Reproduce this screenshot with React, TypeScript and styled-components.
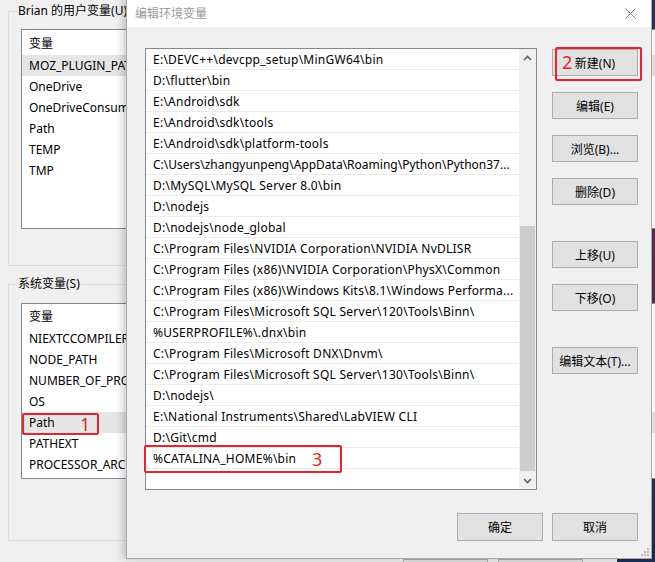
import React from 'react';
import styled, { createGlobalStyle } from 'styled-components';

const GlobalStyle = createGlobalStyle`
  html, body { margin: 0; padding: 0; }
  body {
    width: 655px; height: 562px; overflow: hidden;
    font-family: "Noto Sans", "Noto Sans CJK SC", sans-serif;
    font-size: 12px; color: #000;
  }
`;

const Screen = styled.div`
  position: relative;
  width: 655px;
  height: 562px;
  overflow: hidden;
  background: linear-gradient(180deg, #27345e 0%, #5d2d58 45%, #1b2d55 100%);
`;

const BgWindow = styled.div`
  position: absolute;
  left: 0;
  top: 0;
  width: 617px;
  height: 600px;
  box-sizing: border-box;
  padding: 11px 8px 0 8px;
  background: #f0f0f0;
  display: flex;
  flex-direction: column;
`;

const GroupBox = styled.div<{ $h: number; $pt: number; $mt?: number }>`
  position: relative;
  height: ${p => p.$h}px;
  margin-top: ${p => p.$mt ?? 0}px;
  box-sizing: border-box;
  border: 1px solid #dcdcdc;
  padding: ${p => p.$pt}px 0 0 12px;
`;

const Legend = styled.span`
  position: absolute;
  left: 8px;
  top: -9px;
  padding: 0 1px;
  line-height: 16px;
  background: #f0f0f0;
  white-space: nowrap;
`;

const BgList = styled.div<{ $h: number }>`
  width: 640px;
  height: ${p => p.$h}px;
  box-sizing: border-box;
  border: 1px solid #828790;
  background: #fff;
  display: flex;
  flex-direction: column;
`;

const BgHeader = styled.div<{ $h: number }>`
  height: ${p => p.$h}px;
  display: flex;
  align-items: center;
  padding-left: 7px;
`;

const BgRow = styled.div<{ $sel?: boolean }>`
  position: relative;
  height: 21px;
  line-height: 21px;
  padding-left: 7px;
  background: ${p => (p.$sel ? '#e6e6e6' : 'transparent')};
  white-space: nowrap;
`;

const BgFooter = styled.div`
  margin-top: 18px;
  display: flex;
  justify-content: flex-end;
  gap: 10px;
  padding-right: 26px;
`;

const BgButton = styled.div`
  width: 85px;
  height: 26px;
  box-sizing: border-box;
  border: 1px solid #adadad;
  background: #e1e1e1;
`;

const Dialog = styled.div`
  position: absolute;
  left: 126px;
  top: -1px;
  width: 526px;
  height: 560px;
  box-sizing: border-box;
  border: 1px solid #a9a9a9;
  background: #f0f0f0;
  box-shadow: -3px 0 8px rgba(0, 0, 0, 0.22);
  display: flex;
  flex-direction: column;
`;

const TitleBar = styled.div`
  height: 27px;
  flex: none;
  background: #fff;
  display: flex;
  align-items: center;
  justify-content: space-between;
  padding: 0 15px 0 8px;
`;

const Title = styled.span`
  color: #9a9a9a;
  font-size: 12px;
  margin-top: -2px;
`;

const Body = styled.div`
  display: flex;
  padding: 21px 13px 0 18px;
  gap: 15px;
`;

const PathList = styled.div`
  position: relative;
  width: 392px;
  height: 442px;
  flex: none;
  box-sizing: border-box;
  border: 1px solid #828790;
  background: #fff;
  display: flex;
`;

const Rows = styled.div`
  flex: 1;
  min-width: 0;
  display: flex;
  flex-direction: column;
`;

const PathRow = styled.div`
  position: relative;
  height: 21px;
  flex: none;
  box-sizing: border-box;
  border-bottom: 1px solid #ebebeb;
  padding: 1px 0 0 7px;
  line-height: 20px;
`;

const PathText = styled.div<{ $tight?: boolean }>`
  overflow: hidden;
  white-space: nowrap;
  letter-spacing: ${p => (p.$tight ? 0 : 0.25)}px;
`;

const ScrollBar = styled.div`
  width: 17px;
  flex: none;
  background: #f0f0f0;
  display: flex;
  flex-direction: column;
`;

const ScrollArrow = styled.div`
  height: 17px;
  flex: none;
  display: flex;
  align-items: center;
  justify-content: center;
`;

const ScrollTrack = styled.div`
  flex: 1;
  display: flex;
  flex-direction: column;
  padding: 0 1px;
`;

const Thumb = styled.div<{ $top: number; $h: number }>`
  margin-top: ${p => p.$top}px;
  height: ${p => p.$h}px;
  background: #cdcdcd;
`;

const Side = styled.div`
  display: flex;
  flex-direction: column;
  gap: 16px;
  padding-top: 1px;
`;

const Button = styled.div<{ $w?: number; $h?: number; $mt?: number }>`
  position: relative;
  width: ${p => p.$w ?? 86}px;
  height: ${p => p.$h ?? 27}px;
  margin-top: ${p => p.$mt ?? 0}px;
  box-sizing: border-box;
  border: 1px solid #adadad;
  background: #e1e1e1;
  display: flex;
  align-items: center;
  justify-content: center;
  white-space: nowrap;
  font-size: 12px;
`;

const Footer = styled.div`
  display: flex;
  justify-content: flex-end;
  gap: 9px;
  padding: 23px 13px 0 0;
`;

const Grip = styled.svg`
  position: absolute;
  right: 1px;
  bottom: 1px;
`;

const AnnotBox = styled.div<{ $l: number; $t: number; $w: number; $h: number }>`
  position: absolute;
  left: ${p => p.$l}px;
  top: ${p => p.$t}px;
  width: ${p => p.$w}px;
  height: ${p => p.$h}px;
  box-sizing: border-box;
  border: 2px solid #e8232a;
  border-radius: 2px;
  pointer-events: none;
`;

const Mark = styled.span<{ $l: number; $t: number }>`
  position: absolute;
  left: ${p => p.$l}px;
  top: ${p => p.$t}px;
  color: #e8232a;
  font-family: "Noto Sans", sans-serif;
  font-size: 18px;
  line-height: 18px;
  letter-spacing: 0;
`;

const userVars = ['MOZ_PLUGIN_PATH', 'OneDrive', 'OneDriveConsumer', 'Path', 'TEMP', 'TMP'];
const sysVars = ['NIEXTCCOMPILERSUPP', 'NODE_PATH', 'NUMBER_OF_PROCESSORS', 'OS', 'Path', 'PATHEXT', 'PROCESSOR_ARCHITECTURE'];

const paths = [
  'E:\\DEVC++\\devcpp_setup\\MinGW64\\bin',
  'D:\\flutter\\bin',
  'E:\\Android\\sdk',
  'E:\\Android\\sdk\\tools',
  'E:\\Android\\sdk\\platform-tools',
  'C:\\Users\\zhangyunpeng\\AppData\\Roaming\\Python\\Python37...',
  'D:\\MySQL\\MySQL Server 8.0\\bin',
  'D:\\nodejs',
  'D:\\nodejs\\node_global',
  'C:\\Program Files\\NVIDIA Corporation\\NVIDIA NvDLISR',
  'C:\\Program Files (x86)\\NVIDIA Corporation\\PhysX\\Common',
  'C:\\Program Files (x86)\\Windows Kits\\8.1\\Windows Performa...',
  'C:\\Program Files\\Microsoft SQL Server\\120\\Tools\\Binn\\',
  '%USERPROFILE%\\.dnx\\bin',
  'C:\\Program Files\\Microsoft DNX\\Dnvm\\',
  'C:\\Program Files\\Microsoft SQL Server\\130\\Tools\\Binn\\',
  'D:\\nodejs\\',
  'E:\\National Instruments\\Shared\\LabVIEW CLI',
  'D:\\Git\\cmd',
  '%CATALINA_HOME%\\bin',
];

const Chevron = ({ up }: { up?: boolean }) => (
  <svg width="9" height="6" viewBox="0 0 9 6">
    <path
      d={up ? 'M1 5 L4.5 1.5 L8 5' : 'M1 1 L4.5 4.5 L8 1'}
      fill="none"
      stroke="#606060"
      strokeWidth="1.6"
    />
  </svg>
);

export default function App() {
  return (
    <>
      <GlobalStyle />
      <Screen>
        <BgWindow>
          <GroupBox $h={255} $pt={17}>
            <Legend>Brian 的用户变量(U)</Legend>
            <BgList $h={200}>
              <BgHeader $h={25}>变量</BgHeader>
              {userVars.map((v, i) => (
                <BgRow key={v} $sel={i === 0}>{v}</BgRow>
              ))}
            </BgList>
          </GroupBox>
          <GroupBox $h={257} $pt={18} $mt={18}>
            <Legend>系统变量(S)</Legend>
            <BgList $h={176}>
              <BgHeader $h={24}>变量</BgHeader>
              {sysVars.map((v, i) => (
                <BgRow key={v + i} $sel={i === 4}>
                  {v}
                  {i === 4 && (
                    <>
                      <AnnotBox $l={0} $t={1} $w={77} $h={22} />
                      <Mark $l={58} $t={3}>1</Mark>
                    </>
                  )}
                </BgRow>
              ))}
            </BgList>
          </GroupBox>
          <BgFooter>
            <BgButton />
            <BgButton />
          </BgFooter>
        </BgWindow>

        <Dialog>
          <TitleBar>
            <Title>编辑环境变量</Title>
            <svg width="11" height="11" viewBox="0 0 11 11">
              <path d="M0.5 0.5 L10.5 10.5 M10.5 0.5 L0.5 10.5" stroke="#7a7a7a" strokeWidth="1" />
            </svg>
          </TitleBar>
          <Body>
            <PathList>
              <Rows>
                {paths.map((p, i) => (
                  <PathRow key={i}>
                    <PathText $tight={i === 5}>{p}</PathText>
                    {i === paths.length - 1 && (
                      <>
                        <AnnotBox $l={-2} $t={-3} $w={198} $h={28} />
                        <Mark $l={166} $t={2}>3</Mark>
                      </>
                    )}
                  </PathRow>
                ))}
              </Rows>
              <ScrollBar>
                <ScrollArrow><Chevron up /></ScrollArrow>
                <ScrollTrack>
                  <Thumb $top={160} $h={245} />
                </ScrollTrack>
                <ScrollArrow><Chevron /></ScrollArrow>
              </ScrollBar>
            </PathList>
            <Side>
              <Button>
                新建(N)
                <AnnotBox $l={2} $t={-3} $w={87} $h={34} />
                <Mark $l={9} $t={3}>2</Mark>
              </Button>
              <Button>编辑(E)</Button>
              <Button>浏览(B)...</Button>
              <Button>删除(D)</Button>
              <Button $mt={20}>上移(U)</Button>
              <Button>下移(O)</Button>
              <Button $mt={20}>编辑文本(T)...</Button>
            </Side>
          </Body>
          <Footer>
            <Button $w={86} $h={28}>确定</Button>
            <Button $w={86} $h={28}>取消</Button>
          </Footer>
          <Grip width="10" height="10" viewBox="0 0 10 10">
            {[[7, 1], [7, 4], [4, 4], [7, 7], [4, 7], [1, 7]].map(([x, y], i) => (
              <rect key={i} x={x} y={y} width="2" height="2" fill="#bdbdbd" />
            ))}
          </Grip>
        </Dialog>
      </Screen>
    </>
  );
}
